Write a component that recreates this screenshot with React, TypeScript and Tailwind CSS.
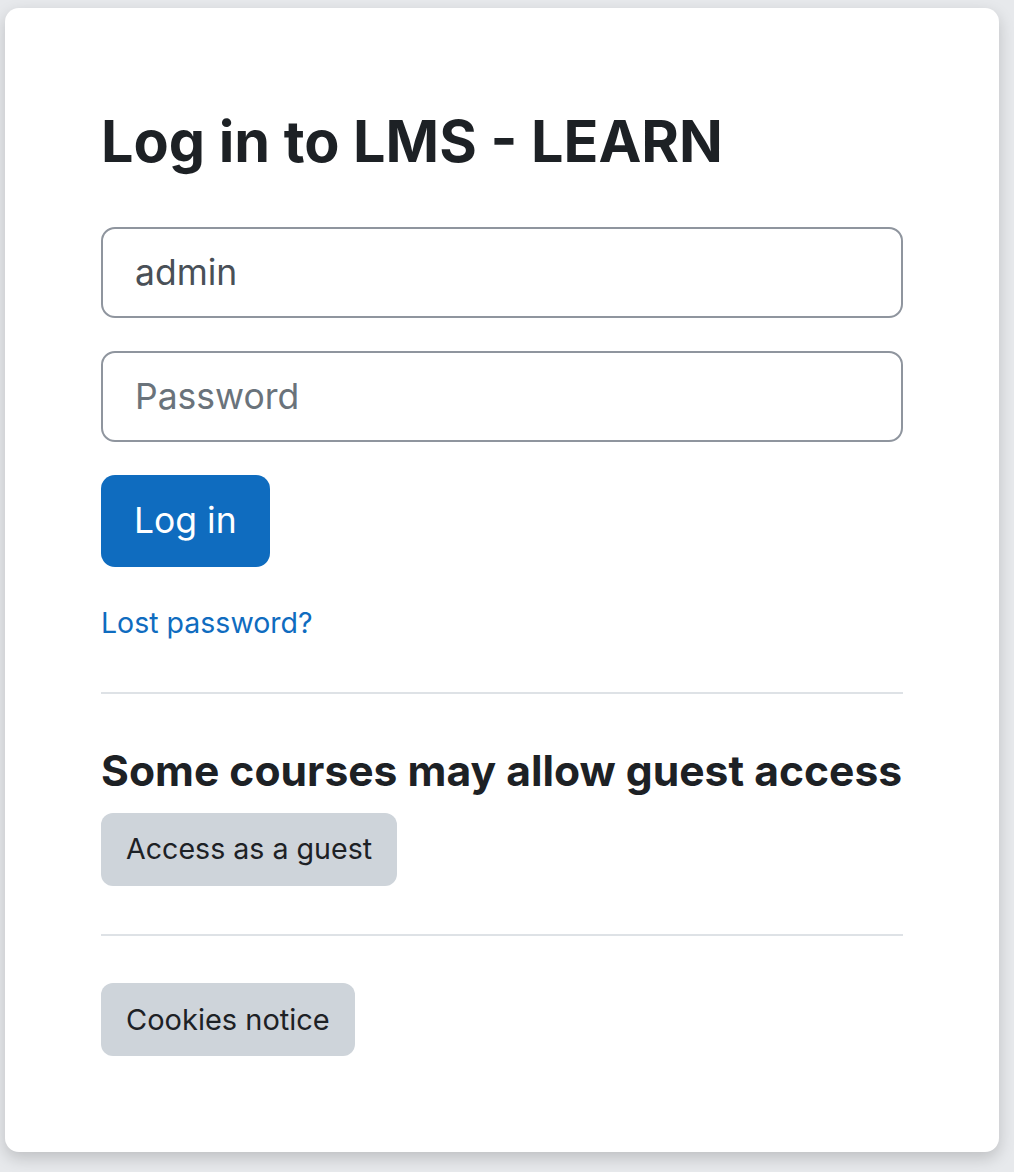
export default function App() {
  return (
    <div
      className="min-h-[1172px] w-full bg-[#e7e9ec] pt-[8px] pl-[5px] pr-[15px] pb-[20px]"
      style={{ fontFamily: "Inter, 'Noto Sans', sans-serif" }}
    >
      <div className="w-[994px] rounded-[14px] bg-white px-[96px] pt-[99px] pb-[96px] shadow-[0_6px_16px_rgba(0,0,0,0.18)]">
        <h1 className="text-[57.5px] font-bold leading-[68px] text-[#1d2125]">
          Log in to LMS - LEARN
        </h1>

        <form className="mt-[52px] flex flex-col" onSubmit={(e) => e.preventDefault()}>
          <input
            type="text"
            defaultValue="admin"
            className="h-[91px] w-full rounded-[14px] border-2 border-[#8f959e] px-[32px] text-[35.5px] text-[#495057] outline-none"
          />
          <input
            type="password"
            placeholder="Password"
            className="mt-[33px] h-[91px] w-full rounded-[14px] border-2 border-[#8f959e] px-[32px] text-[35.5px] text-[#495057] outline-none placeholder:text-[#6a737b]"
          />
          <div>
            <button
              type="submit"
              className="mt-[33px] h-[92px] rounded-[14px] bg-[#0f6cbf] px-[33px] text-[35.5px] text-white"
            >
              Log in
            </button>
          </div>
        </form>

        <a href="#" className="mt-[35px] block text-[28.5px] leading-[42px] text-[#0f6cbf]">
          Lost password?
        </a>

        <hr className="mt-[48px] border-t-2 border-[#dee2e6]" />

        <h2 className="mt-[52px] text-[42.6px] font-bold leading-[50px] text-[#1d2125]">
          Some courses may allow guest access
        </h2>
        <button className="mt-[17px] h-[73px] rounded-[12px] bg-[#ced4da] px-[25px] text-[28.6px] text-[#1d2125]">
          Access as a guest
        </button>

        <hr className="mt-[48px] border-t-2 border-[#dee2e6]" />

        <button className="mt-[47px] h-[73px] rounded-[12px] bg-[#ced4da] px-[25px] text-[29px] text-[#1d2125]">
          Cookies notice
        </button>
      </div>
    </div>
  );
}
